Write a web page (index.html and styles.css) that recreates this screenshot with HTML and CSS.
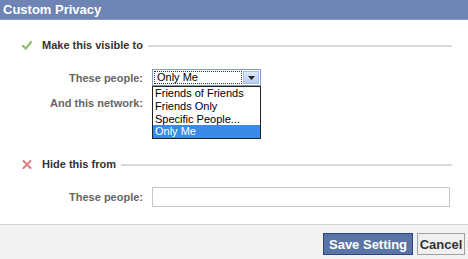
FILE: index.html
```html
<!DOCTYPE html>
<html lang="en">
<head>
  <meta charset="UTF-8">
  <title>Custom Privacy</title>
  <link rel="stylesheet" href="styles.css">
</head>
<body>
  <div class="dialog">
    <header class="dialog-title">Custom Privacy</header>

    <div class="dialog-body">
      <div class="section-head">
        <svg class="icon" width="10" height="9" viewBox="0 0 10 9">
          <path d="M1 5 L3.8 7.6 L9 1" fill="none" stroke="#8cc06a" stroke-width="2.2" stroke-linecap="round" stroke-linejoin="round"/>
        </svg>
        <span class="section-title">Make this visible to</span>
        <span class="rule"></span>
      </div>

      <div class="field-row first">
        <label class="field-label">These people:</label>
        <div class="select">
          <span class="select-value">Only Me</span>
          <span class="select-arrow">
            <svg width="7" height="4" viewBox="0 0 7 4"><path d="M0 0 H7 L3.5 4 Z" fill="#222"/></svg>
          </span>
          <ul class="select-list">
            <li>Friends of Friends</li>
            <li>Friends Only</li>
            <li>Specific People...</li>
            <li class="active">Only Me</li>
          </ul>
        </div>
      </div>

      <div class="field-row">
        <label class="field-label">And this network:</label>
        <div class="empty-control"></div>
      </div>

      <div class="section-head second">
        <svg class="icon" width="10" height="9" viewBox="0 0 10 9">
          <path d="M1.5 1 L8.5 8 M8.5 1 L1.5 8" fill="none" stroke="#e07a7a" stroke-width="2" stroke-linecap="round"/>
        </svg>
        <span class="section-title">Hide this from</span>
        <span class="rule"></span>
      </div>

      <div class="field-row third">
        <label class="field-label">These people:</label>
        <input class="text-input" type="text">
      </div>
    </div>

    <footer class="dialog-footer">
      <button class="btn btn-primary">Save Setting</button>
      <button class="btn btn-cancel">Cancel</button>
    </footer>
  </div>
</body>
</html>
```

FILE: styles.css
```css
* {
  margin: 0;
  padding: 0;
  box-sizing: border-box;
}

body {
  font-family: 'Liberation Sans', Arial, sans-serif;
  background-color: #fff;
  width: 468px;
  height: 259px;
  overflow: hidden;
}

.dialog {
  display: flex;
  flex-direction: column;
  height: 259px;
}

.dialog-title {
  height: 20px;
  background-color: #6d84b4;
  border-bottom: 1px solid #8a9cc4;
  color: #fff;
  font-weight: bold;
  font-size: 13px;
  line-height: 19px;
  padding-left: 3px;
}

.dialog-body {
  flex: 1;
  padding: 18px 16px 0 22px;
}

.section-head {
  display: flex;
  align-items: center;
  height: 14px;
}

.section-head.second {
  margin-top: 46px;
}

.icon {
  flex: none;
  margin-right: 10px;
}

.section-title {
  font-size: 11px;
  font-weight: bold;
  color: #333;
  white-space: nowrap;
}

.rule {
  flex: 1;
  height: 2px;
  margin-left: 5px;
  margin-top: 2px;
  background-color: #d9d9d9;
}

.field-row {
  display: flex;
  align-items: center;
  margin-top: 8px;
  margin-left: -22px;
}

.field-row.first {
  margin-top: 17px;
}

.field-row.third {
  margin-top: 16px;
}

.field-label {
  width: 143px;
  text-align: right;
  font-size: 11px;
  font-weight: bold;
  color: #666;
  margin-right: 9px;
}

.select {
  position: relative;
  width: 109px;
  height: 17px;
  border: 1px solid #7f9db9;
  background: #fff;
  display: flex;
  align-items: stretch;
  padding: 1px;
}

.select-value {
  flex: 1;
  border: 1px dotted #333;
  font-size: 11px;
  line-height: 11px;
  padding-left: 2px;
  color: #000;
}

.select-arrow {
  width: 16px;
  margin-left: 1px;
  background: linear-gradient(#dfe8fb, #b9cdf5);
  border: 1px solid #a9bfe9;
  display: flex;
  align-items: center;
  justify-content: center;
}

.select-list {
  position: absolute;
  top: 16px;
  left: -1px;
  width: 109px;
  list-style: none;
  border: 1px solid #222;
  background: #fff;
  z-index: 2;
}

.select-list li {
  font-size: 11px;
  line-height: 12.75px;
  padding-left: 2px;
  color: #000;
}

.select-list li.active {
  background-color: #3a8ae6;
  color: #fff;
}

.empty-control {
  height: 17px;
}

.text-input {
  width: 298px;
  height: 20px;
  border: 1px solid #c6c6c6;
  background: #fff;
  outline: none;
}

.dialog-footer {
  height: 35px;
  background-color: #f2f2f2;
  border-top: 1px solid #d4d4d4;
  display: flex;
  justify-content: flex-end;
  align-items: flex-start;
  gap: 4px;
  padding: 8px 3px 0 0;
}

.btn {
  height: 22px;
  font-family: 'Liberation Sans', Arial, sans-serif;
  font-size: 13px;
  font-weight: bold;
  padding: 0;
  white-space: nowrap;
  cursor: pointer;
}

.btn-primary {
  width: 90px;
  background-color: #5b74a8;
  border: 1px solid #29447e;
  color: #fff;
}

.btn-cancel {
  width: 48px;
  background-color: #f0f0f0;
  border: 1px solid #a0a0a0;
  color: #333;
}
```
